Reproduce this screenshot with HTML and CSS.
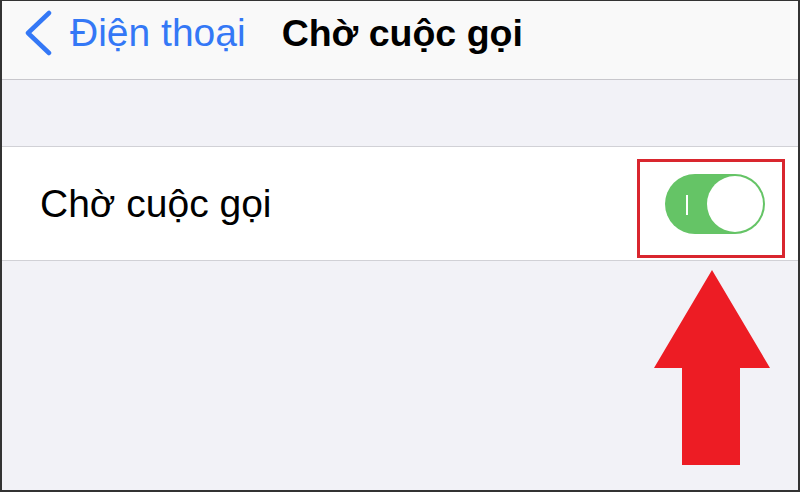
FILE: index.html
```html
<!DOCTYPE html>
<html lang="vi">
<head>
    <meta charset="UTF-8">
    <meta name="viewport" content="width=device-width, initial-scale=1.0">
    <title>Chờ cuộc gọi</title>
    <link rel="stylesheet" href="styles.css">
</head>
<body>
    <div class="screen">
        <header class="navbar">
            <a class="back" href="#">
                <svg class="chevron" width="28" height="46" viewBox="0 0 28 46">
                    <path d="M25 3 L4 23 L25 43" fill="none" stroke="#3478f6" stroke-width="4.5" stroke-linecap="round" stroke-linejoin="round"/>
                </svg>
                <span>Điện thoại</span>
            </a>
            <h1 class="title">Chờ cuộc gọi</h1>
        </header>

        <div class="spacer"></div>

        <div class="row">
            <span class="row-label">Chờ cuộc gọi</span>
            <div class="switch on">
                <span class="switch-mark"></span>
                <span class="switch-knob"></span>
            </div>
        </div>

        <!-- annotation -->
        <div class="highlight"></div>
        <svg class="arrow" width="116" height="196" viewBox="0 0 116 196">
            <polygon points="58,0 116,98 86,98 86,195 28,195 28,98 0,98" fill="#ed1c24"/>
        </svg>
    </div>
</body>
</html>
```

FILE: styles.css
```css
* {
    box-sizing: border-box;
}

body {
    margin: 0;
    padding: 0;
    font-family: 'Liberation Sans', Arial, sans-serif;
    background: #fff;
}

.screen {
    position: relative;
    width: 800px;
    height: 492px;
    border: 2px solid #333;
    border-top-width: 1px;
    background: #f2f2f7;
    overflow: hidden;
}

.navbar {
    display: flex;
    align-items: center;
    height: 79px;
    padding: 0 0 14px 22px;
    background: #f9f9f9;
    border-bottom: 1px solid #c8c7cc;
}

.back {
    display: flex;
    align-items: center;
    gap: 18px;
    color: #3478f6;
    text-decoration: none;
    font-size: 39px;
}

.title {
    margin: 0 0 0 36px;
    font-size: 37.5px;
    font-weight: bold;
    color: #000;
}

.spacer {
    height: 67px;
    border-bottom: 1px solid #d1d1d6;
}

.row {
    display: flex;
    align-items: center;
    justify-content: space-between;
    height: 114px;
    padding: 0 33px 0 38px;
    background: #fff;
    border-bottom: 1px solid #d1d1d6;
}

.row-label {
    font-size: 39px;
    color: #000;
}

.switch {
    position: relative;
    width: 100px;
    height: 60px;
    border-radius: 30px;
    background: #65c466;
}

.switch-mark {
    position: absolute;
    left: 21px;
    top: 21px;
    width: 2px;
    height: 20px;
    background: #fff;
}

.switch-knob {
    position: absolute;
    right: 2px;
    top: 2px;
    width: 56px;
    height: 56px;
    border-radius: 50%;
    background: #fff;
}

.highlight {
    position: absolute;
    left: 635px;
    top: 158px;
    width: 148px;
    height: 99px;
    border: 3px solid #d9262e;
}

.arrow {
    position: absolute;
    left: 652px;
    top: 269px;
}
```
